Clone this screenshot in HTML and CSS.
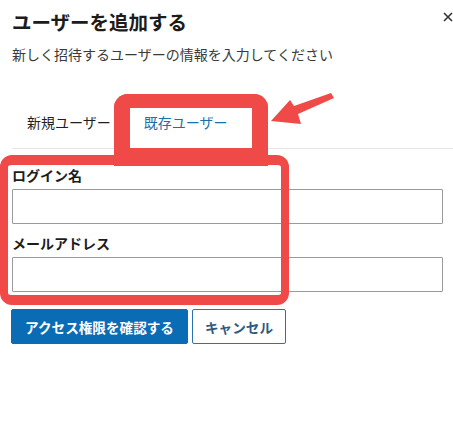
FILE: index.html
```html
<!DOCTYPE html>
<html lang="ja">
<head>
<meta charset="utf-8">
<title>ユーザーを追加する</title>
<link rel="stylesheet" href="styles.css">
</head>
<body>
<div class="dialog">
  <header class="head">
    <h1 class="title">ユーザーを追加する</h1>
    <p class="desc">新しく招待するユーザーの情報を入力してください</p>
    <button class="close" aria-label="閉じる">
      <svg viewBox="0 0 10 10" width="10" height="10"><path d="M1 1L9 9M9 1L1 9" stroke="#333" stroke-width="1.6" fill="none"/></svg>
    </button>
  </header>
  <nav class="tabs">
    <span class="tab">新規ユーザー</span>
    <span class="tab active">既存ユーザー</span>
  </nav>
  <form class="form">
    <label class="label">ログイン名</label>
    <input class="input" type="text">
    <label class="label second">メールアドレス</label>
    <input class="input" type="text">
    <div class="actions">
      <button type="button" class="btn primary">アクセス権限を確認する</button>
      <button type="button" class="btn normal">キャンセル</button>
    </div>
  </form>
  <div class="mark mark-tab"></div>
  <div class="mark mark-form"></div>
  <svg class="arrow" viewBox="0 0 453 434" width="453" height="434">
    <polygon points="271,121 290,100 294,106 331,93 334,98 298,114 301,124" fill="#f04a48"/>
  </svg>
</div>
</body>
</html>
```

FILE: styles.css
```css
* { box-sizing: border-box; }
html, body { margin: 0; padding: 0; background: #fff; }
body {
  font-family: "Noto Sans CJK JP", "Noto Sans", sans-serif;
  color: #16191f;
  width: 453px;
  height: 434px;
  overflow: hidden;
}
.dialog { position: relative; width: 453px; height: 434px; }
.head { padding: 10px 0 0 12px; }
.title {
  margin: 0;
  font-size: 19.5px;
  line-height: 24px;
  font-weight: 700;
  color: #1c1c1c;
}
.desc {
  margin: 10px 0 0;
  font-size: 14px;
  line-height: 20px;
  color: #3a3a3a;
}
.close {
  position: absolute;
  top: 12px;
  left: 443px;
  width: 12px;
  height: 12px;
  padding: 0;
  border: 0;
  background: none;
  display: flex;
}
.tabs {
  margin: 28px 0 0 12px;
  display: flex;
  border-bottom: 1px solid #e4e6e8;
}
.tab {
  padding: 20px 16px 16px 15px;
  font-size: 14px;
  line-height: 20px;
  color: #1f1f1f;
}
.tab.active { color: #1a70ac; padding-left: 17px; }
.form { padding: 16px 10px 0 12px; display: flex; flex-direction: column; }
.label {
  font-size: 14px;
  line-height: 20px;
  font-weight: 700;
  color: #1c1c1c;
  margin-bottom: 4px;
}
.label.second { margin-top: 9px; }
.input {
  width: 431px;
  height: 35px;
  border: 1px solid #9a9a9a;
  border-radius: 1px;
  margin: 0;
  background: #fff;
}
.actions { display: flex; gap: 4px; margin-top: 17px; margin-left: -1px; }
.btn {
  font-family: inherit;
  font-size: 13.6px;
  line-height: 20px;
  font-weight: 700;
  height: 35px;
  border-radius: 2px;
  padding: 0;
  white-space: nowrap;
  display: flex;
  align-items: center;
  justify-content: center;
}
.primary { width: 177px; background: #0b6cb6; border: 1px solid #0b6cb6; color: #fff; }
.normal { width: 94px; background: #fff; border: 1px solid #2b72b0; color: #2f5b80; }
.mark { position: absolute; border: solid #f04a48; }
.mark-tab {
  left: 114px; top: 94px; width: 154px; height: 72px;
  border-width: 14px 16px 0 16px;
  border-radius: 14px 14px 0 0;
  box-shadow: inset 0 -18px 0 #f04a48;
}
.mark-form {
  left: 0; top: 155px; width: 289px; height: 150px;
  border-width: 10px 8px 10px 8px;
  border-radius: 12px;
}
.arrow { position: absolute; left: 0; top: 0; pointer-events: none; }
```
